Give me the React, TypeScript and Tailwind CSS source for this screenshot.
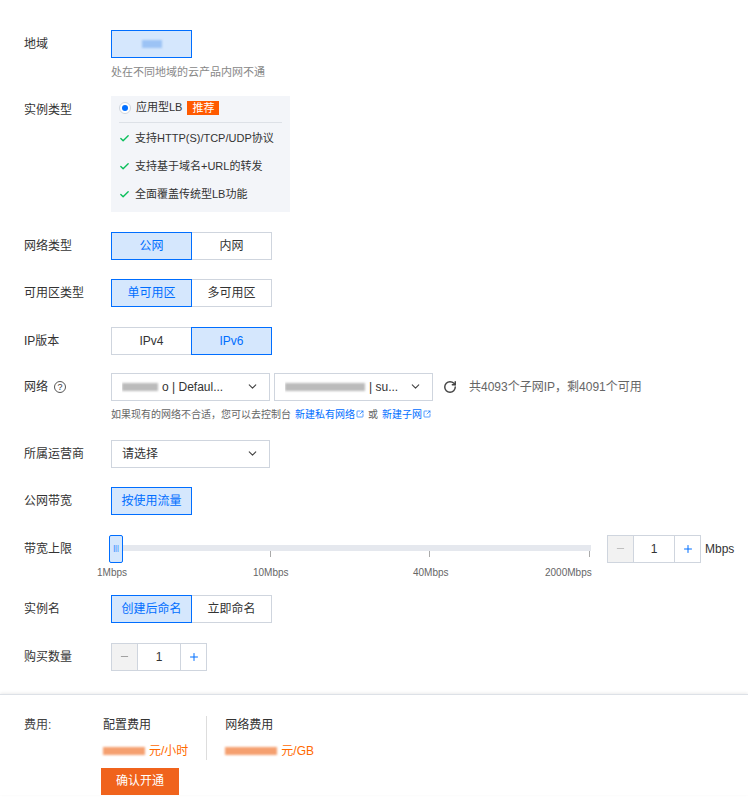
import { ChevronDown, RotateCw, Check, Minus, Plus, SquareArrowOutUpRight } from "lucide-react"

const font = { fontFamily: '"Liberation Sans", "Noto Sans CJK SC", sans-serif' }

function Label({ children }: { children: React.ReactNode }) {
  return <div className="w-[87px] shrink-0 text-[12px] text-[#333] leading-[28px]">{children}</div>
}

function Seg({ items, active }: { items: string[]; active: number }) {
  return (
    <div className="flex">
      {items.map((t, i) => (
        <div
          key={t}
          className={
            "w-[81px] h-[28px] flex items-center justify-center text-[12px] border " +
            (i === active
              ? "bg-[#d5e7fd] border-[#006eff] text-[#006eff] relative z-10"
              : "bg-white border-[#cfd5de] text-[#333]") +
            (i > 0 ? " -ml-px" : "")
          }
        >
          {t}
        </div>
      ))}
    </div>
  )
}

function Blur({ w, c = "#bbb" }: { w: number; c?: string }) {
  return <span className="inline-block h-[8px] blur-[1px] align-middle" style={{ width: w, background: c }} />
}

function Select({ children }: { children: React.ReactNode }) {
  return (
    <div className="w-[159px] h-[28px] border border-[#cfd5de] bg-white flex items-center justify-between px-[10px] text-[12px] text-[#333]">
      <div className="flex items-center gap-1 overflow-hidden whitespace-nowrap">{children}</div>
      <ChevronDown className="w-[13px] h-[13px] text-[#444]" />
    </div>
  )
}

export default function App() {
  return (
    <div style={font} className="w-[748px] h-[797px] bg-white overflow-hidden">
      <div className="pl-[24px] pt-[30px]">
        <div className="flex">
          <Label>地域</Label>
          <div>
            <div className="w-[81px] h-[28px] bg-[#d5e7fd] border border-[#006eff] flex items-center justify-center">
              <Blur w={20} c="#9cc3f5" />
            </div>
            <div className="text-[11px] text-[#888] mt-[6px]">处在不同地域的云产品内网不通</div>
          </div>
        </div>

        <div className="flex mt-[15px]">
          <Label>实例类型</Label>
          <div className="w-[179px] bg-[#f3f5f9] px-[8px] pt-[4px] pb-[3px] text-[11px] text-[#333]">
            <div className="flex items-center h-[16px] gap-[5px]">
              <span className="w-[12px] h-[12px] rounded-full border border-[#cfd5de] bg-white flex items-center justify-center">
                <span className="w-[6px] h-[6px] rounded-full bg-[#006eff]" />
              </span>
              <span>应用型LB</span>
              <span className="bg-[#ff5a00] text-white px-[5px] leading-[14px] text-[11px]">推荐</span>
            </div>
            <div className="h-px bg-[#dde1e7] mt-[6px] mb-[2px]" />
            {["支持HTTP(S)/TCP/UDP协议", "支持基于域名+URL的转发", "全面覆盖传统型LB功能"].map(t => (
              <div key={t} className="flex items-center gap-[5px] h-[28px]">
                <Check className="w-[11px] h-[11px] text-[#0abf5b]" strokeWidth={3} />
                {t}
              </div>
            ))}
          </div>
        </div>

        <div className="flex mt-[20px]">
          <Label>网络类型</Label>
          <Seg items={["公网", "内网"]} active={0} />
        </div>
        <div className="flex mt-[19px]">
          <Label>可用区类型</Label>
          <Seg items={["单可用区", "多可用区"]} active={0} />
        </div>
        <div className="flex mt-[20px]">
          <Label>IP版本</Label>
          <Seg items={["IPv4", "IPv6"]} active={1} />
        </div>

        <div className="flex mt-[18px]">
          <Label>
            <span className="flex items-center gap-[6px]">
              网络
              <span className="w-[12px] h-[12px] rounded-full border border-[#555] text-[9px] leading-[10px] text-center">?</span>
            </span>
          </Label>
          <div>
            <div className="flex items-center gap-[4px]">
              <Select>
                <Blur w={36} /> <span>o | Defaul...</span>
              </Select>
              <Select>
                <Blur w={80} /> <span>| su...</span>
              </Select>
              <RotateCw className="w-[14px] h-[14px] text-[#444] ml-[6px]" strokeWidth={2.5} />
              <span className="text-[12px] text-[#666] ml-[8px]">共4093个子网IP，剩4091个可用</span>
            </div>
            <div className="text-[10px] text-[#666] mt-[6px] flex items-center gap-[4px]">
              如果现有的网络不合适，您可以去控制台
              <span className="text-[#006eff] flex items-center gap-[1px]">新建私有网络<SquareArrowOutUpRight className="w-[8px] h-[8px]" /></span>
              或
              <span className="text-[#006eff] flex items-center gap-[1px]">新建子网<SquareArrowOutUpRight className="w-[8px] h-[8px]" /></span>
            </div>
          </div>
        </div>

        <div className="flex mt-[18px]">
          <Label>所属运营商</Label>
          <Select>请选择</Select>
        </div>
        <div className="flex mt-[19px]">
          <Label>公网带宽</Label>
          <Seg items={["按使用流量"]} active={0} />
        </div>

        <div className="flex mt-[20px]">
          <Label>带宽上限</Label>
          <div className="w-[480px] relative h-[28px]">
            <div className="absolute left-0 right-0 top-[10px] h-[6px] bg-[#e5e8ee]" />
            {[159, 318, 478].map(x => (
              <div key={x} className="absolute top-[16px] w-px h-[6px] bg-[#aaa]" style={{ left: x }} />
            ))}
            <div className="absolute -left-[2px] top-0 w-[14px] h-[28px] bg-[#d5e7fd] border border-[#006eff] rounded-[2px] flex items-center justify-center text-[7px] text-[#006eff]">|||</div>
            <div className="absolute top-[30px] left-0 right-0 text-[10px] text-[#666]">
              <span className="absolute -left-[14px]">1Mbps</span>
              <span className="absolute left-[142px]">10Mbps</span>
              <span className="absolute left-[302px]">40Mbps</span>
              <span className="absolute left-[434px]">2000Mbps</span>
            </div>
          </div>
          <div className="ml-[16px] flex items-center">
            <div className="flex h-[28px] border border-[#cfd5de]">
              <div className="w-[26px] bg-[#f2f2f2] flex items-center justify-center border-r border-[#cfd5de]"><Minus className="w-[11px] h-[11px] text-[#bbb]" /></div>
              <div className="w-[40px] flex items-center justify-center text-[12px] text-[#333]">1</div>
              <div className="w-[26px] flex items-center justify-center border-l border-[#cfd5de]"><Plus className="w-[12px] h-[12px] text-[#006eff]" /></div>
            </div>
            <span className="ml-[4px] text-[12px] text-[#333]">Mbps</span>
          </div>
        </div>

        <div className="flex mt-[32px]">
          <Label>实例名</Label>
          <Seg items={["创建后命名", "立即命名"]} active={0} />
        </div>
        <div className="flex mt-[20px]">
          <Label>购买数量</Label>
          <div className="flex h-[28px] border border-[#cfd5de]">
            <div className="w-[26px] bg-[#f2f2f2] flex items-center justify-center border-r border-[#cfd5de]"><Minus className="w-[11px] h-[11px] text-[#999]" /></div>
            <div className="w-[42px] flex items-center justify-center text-[12px] text-[#333]">1</div>
            <div className="w-[26px] flex items-center justify-center border-l border-[#cfd5de]"><Plus className="w-[12px] h-[12px] text-[#006eff]" /></div>
          </div>
        </div>
      </div>

      <div className="mt-[23px] border-t border-[#dde1e7] shadow-[0_-1px_3px_rgba(0,0,0,0.08)] pl-[24px] pt-[21px] flex text-[12px]">
        <div className="w-[79px] text-[#444]">费用:</div>
        <div>
          <div className="flex">
            <div className="pr-[18px] border-r border-[#ddd]">
              <div className="text-[#333]">配置费用</div>
              <div className="mt-[8px] flex items-center gap-[4px] text-[#ff6a00]">
                <Blur w={42} c="#f5a070" /> 元/小时
              </div>
            </div>
            <div className="pl-[18px]">
              <div className="text-[#333]">网络费用</div>
              <div className="mt-[8px] flex items-center gap-[4px] text-[#ff6a00]">
                <Blur w={52} c="#f5a070" /> 元/GB
              </div>
            </div>
          </div>
          <div className="mt-[8px] -ml-[2px] w-[78px] h-[27px] bg-[#f0631c] text-white flex items-center justify-center">确认开通</div>
        </div>
      </div>
    </div>
  )
}
